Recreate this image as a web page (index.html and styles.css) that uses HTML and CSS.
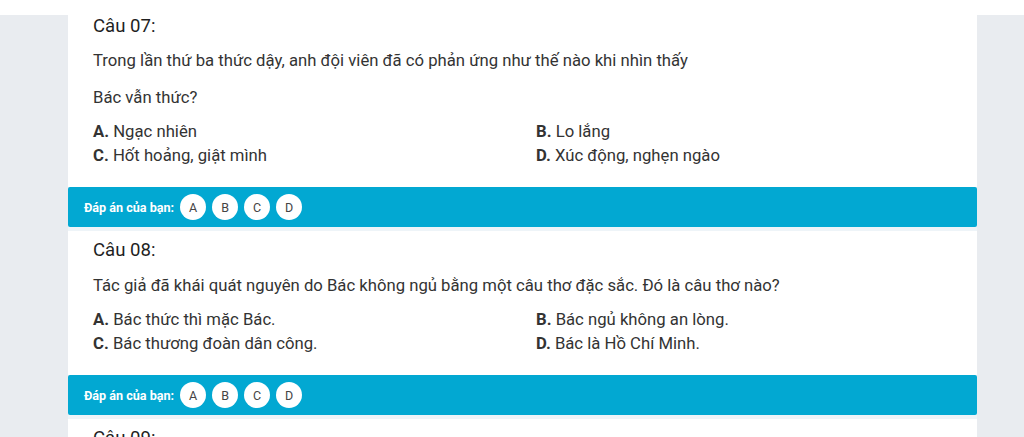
FILE: index.html
```html
<!DOCTYPE html>
<html lang="vi">
<head>
<meta charset="utf-8">
<link rel="stylesheet" href="styles.css">
</head>
<body>
<div class="page">
  <div class="container">
    <section class="question question--first">
      <div class="card">
        <h3 class="title">Câu 07:</h3>
        <p class="text">Trong lần thứ ba thức dậy, anh đội viên đã có phản ứng như thế nào khi nhìn thấy</p>
        <p class="text text--next">Bác vẫn thức?</p>
        <div class="options">
          <div class="option"><b>A.</b> Ngạc nhiên</div>
          <div class="option"><b>B.</b> Lo lắng</div>
          <div class="option"><b>C.</b> Hốt hoảng, giật mình</div>
          <div class="option"><b>D.</b> Xúc động, nghẹn ngào</div>
        </div>
      </div>
      <div class="answer">
        <span class="answer-label">Đáp án của bạn:</span>
        <span class="choice">A</span>
        <span class="choice">B</span>
        <span class="choice">C</span>
        <span class="choice">D</span>
      </div>
    </section>
    <section class="question">
      <div class="card">
        <h3 class="title">Câu 08:</h3>
        <p class="text">Tác giả đã khái quát nguyên do Bác không ngủ bằng một câu thơ đặc sắc. Đó là câu thơ nào?</p>
        <div class="options">
          <div class="option"><b>A.</b> Bác thức thì mặc Bác.</div>
          <div class="option"><b>B.</b> Bác ngủ không an lòng.</div>
          <div class="option"><b>C.</b> Bác thương đoàn dân công.</div>
          <div class="option"><b>D.</b> Bác là Hồ Chí Minh.</div>
        </div>
      </div>
      <div class="answer">
        <span class="answer-label">Đáp án của bạn:</span>
        <span class="choice">A</span>
        <span class="choice">B</span>
        <span class="choice">C</span>
        <span class="choice">D</span>
      </div>
    </section>
    <section class="question">
      <div class="card">
        <h3 class="title">Câu 09:</h3>
      </div>
    </section>
  </div>
</div>
</body>
</html>
```

FILE: styles.css
```css
html, body {
  margin: 0;
  padding: 0;
  background: #ffffff;
  font-family: Roboto, "Liberation Sans", Arial, sans-serif;
  color: #333333;
  overflow: hidden;
}

.page {
  margin-top: 15px;
  background: #e9ecf0;
  padding: 0 47px 0 68px;
  min-height: 600px;
}

.container {
  display: flex;
  flex-direction: column;
}

.question {
  display: flex;
  flex-direction: column;
  background: #eef4f8;
  padding-bottom: 4px;
}

.card {
  background: #ffffff;
  padding: 7px 25px 19px;
}

.question--first .card {
  padding-top: 0;
}

.title {
  margin: 0;
  font-size: 18.6px;
  line-height: 24px;
  font-weight: 400;
  color: #1f1f1f;
}

.question--first .title {
  line-height: 22px;
}

.text {
  margin: 12px 0 0;
  font-size: 16.7px;
  line-height: 24px;
  color: #333333;
}

.text--next {
  margin-top: 13px;
}

.options {
  margin-top: 10px;
  display: grid;
  grid-template-columns: 443px 1fr;
  font-size: 16.7px;
  line-height: 24px;
  color: #333333;
}

.option b {
  font-weight: 700;
  color: #333333;
}

.answer {
  display: flex;
  align-items: center;
  gap: 6px;
  height: 40px;
  padding: 0 16px;
  background: #02a8d2;
  border-radius: 2px;
}

.answer-label {
  color: #ffffff;
  font-size: 12.6px;
  font-weight: 700;
}

.choice {
  width: 26px;
  height: 26px;
  border-radius: 50%;
  background: #ffffff;
  color: #444444;
  font-size: 12.5px;
  display: flex;
  align-items: center;
  justify-content: center;
}
```
